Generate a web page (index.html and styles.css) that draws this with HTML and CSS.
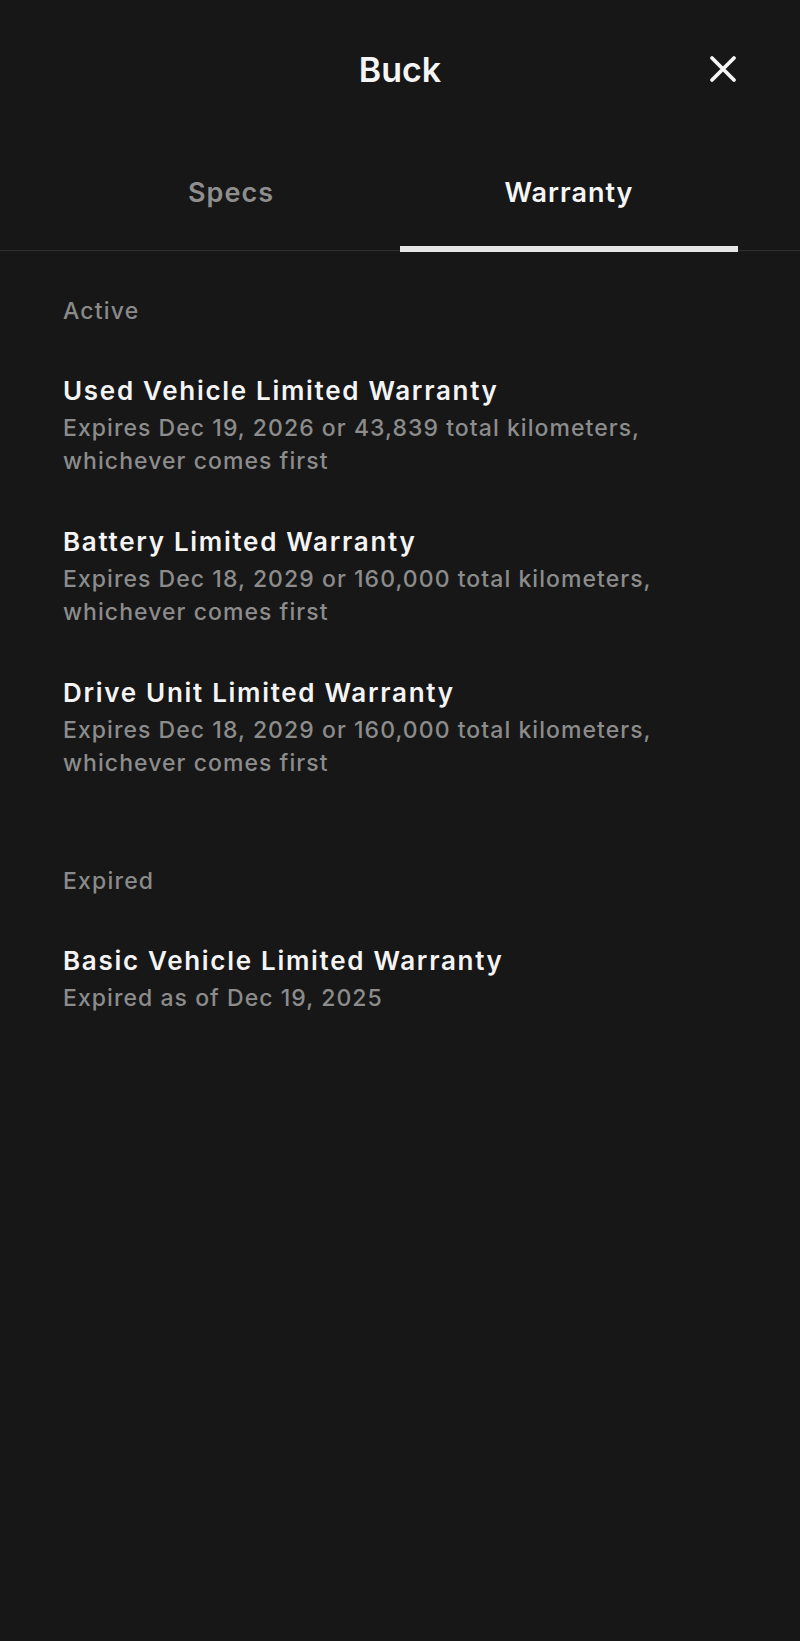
FILE: index.html
```html
<!DOCTYPE html>
<html>
  <head>
    <meta charset="utf-8">
    <title>Buck - Warranty</title>
    <link rel="stylesheet" href="styles.css">
  </head>
  <body>
    <div class="sheet">
      <header class="topbar">
        <span></span>
        <h1 class="title">Buck</h1>
        <button class="close" aria-label="Close">
          <svg width="28" height="28" viewBox="0 0 28 28">
            <path d="M3 3 L25 25 M25 3 L3 25" stroke="#f5f5f5" stroke-width="3.8" stroke-linecap="round" fill="none"/>
          </svg>
        </button>
      </header>

      <nav class="tabs">
        <a class="tab">Specs</a>
        <a class="tab tab-active">Warranty</a>
      </nav>

      <main class="content">
        <section class="group">
          <div class="group-label">Active</div>
          <ul class="items">
            <li class="item">
              <div class="item-name">Used Vehicle Limited Warranty</div>
              <div class="item-desc">Expires Dec 19, 2026 or 43,839 total kilometers, whichever comes first</div>
            </li>
            <li class="item">
              <div class="item-name">Battery Limited Warranty</div>
              <div class="item-desc">Expires Dec 18, 2029 or 160,000 total kilometers, whichever comes first</div>
            </li>
            <li class="item">
              <div class="item-name">Drive Unit Limited Warranty</div>
              <div class="item-desc">Expires Dec 18, 2029 or 160,000 total kilometers, whichever comes first</div>
            </li>
          </ul>
        </section>

        <section class="group">
          <div class="group-label">Expired</div>
          <ul class="items">
            <li class="item">
              <div class="item-name">Basic Vehicle Limited Warranty</div>
              <div class="item-desc">Expired as of Dec 19, 2025</div>
            </li>
          </ul>
        </section>
      </main>
    </div>
  </body>
</html>
```

FILE: styles.css
```css
* {
  box-sizing: border-box;
}
html, body {
  margin: 0;
  padding: 0;
  background-color: #171717;
}
body {
  font-family: Inter, "Noto Sans", "Liberation Sans", sans-serif;
  color: #f2f2f2;
}
.sheet {
  min-height: 1641px;
  background-color: #171717;
}

.topbar {
  display: grid;
  grid-template-columns: 1fr auto 1fr;
  align-items: center;
  padding: 50px 63px 0 63px;
}
.title {
  margin: 0;
  font-size: 34px;
  line-height: 40px;
  font-weight: 600;
  color: #f5f5f5;
}
.close {
  justify-self: end;
  width: 28px;
  height: 28px;
  padding: 0;
  margin-top: -3px;
  border: none;
  background: none;
  display: flex;
}

.tabs {
  display: flex;
  padding: 0 62px;
  margin-top: 87px;
  border-bottom: 1px solid #2e2e2e;
}
.tab {
  flex: 1;
  text-align: center;
  font-size: 27px;
  line-height: 32px;
  font-weight: 600;
  letter-spacing: 1px;
  color: #8e8e8e;
  padding-bottom: 37px;
  border-bottom: 6px solid transparent;
  margin-bottom: -2px;
}
.tab-active {
  color: #f5f5f5;
  border-bottom-color: #e6e6e6;
}

.content {
  padding: 45px 63px 0 63px;
}
.group + .group {
  margin-top: 86px;
}
.group-label {
  font-size: 23px;
  line-height: 30px;
  font-weight: 500;
  letter-spacing: 1.2px;
  color: #8a8a8a;
  margin-bottom: 49px;
}
.items {
  list-style: none;
  margin: 0;
  padding: 0;
  display: flex;
  flex-direction: column;
  gap: 48px;
}
.item-name {
  font-size: 26px;
  line-height: 32px;
  font-weight: 600;
  letter-spacing: 1.7px;
  color: #f4f4f4;
}
.item-desc {
  margin-top: 5px;
  font-size: 23px;
  line-height: 33px;
  font-weight: 500;
  letter-spacing: 1.05px;
  color: #8c8c8c;
  max-width: 660px;
}
```
